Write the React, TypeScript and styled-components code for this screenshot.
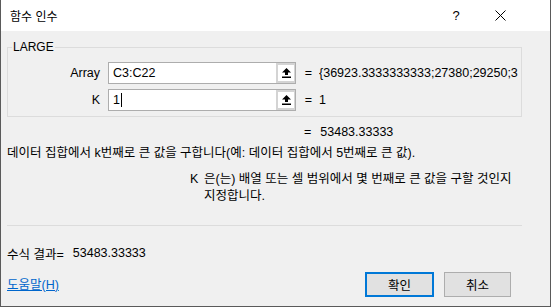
import styled, { createGlobalStyle } from 'styled-components';

const GlobalStyle = createGlobalStyle`
  html, body {
    margin: 0;
    padding: 0;
    background: #ffffff;
  }
  * {
    box-sizing: border-box;
  }
`;

const FONT = `"Liberation Sans", "Noto Sans CJK KR", sans-serif`;

// 대화상자 전체 틀
const Window = styled.div`
  width: 551px;
  height: 307px;
  display: flex;
  flex-direction: column;
  border-left: 1px solid #5a5a5a;
  border-right: 1px solid #5a5a5a;
  border-bottom: 1px solid #5a5a5a;
  font-family: ${FONT};
  font-size: 12.5px;
  color: #000;
  overflow: hidden;
`;

const TitleBar = styled.div`
  height: 31px;
  flex: none;
  display: flex;
  align-items: center;
  background: #ffffff;
  padding: 0 28px 0 9px;
`;

const Title = styled.div`
  flex: 1;
  font-size: 12px;
`;

const TitleButton = styled.div`
  width: 44px;
  height: 31px;
  display: flex;
  align-items: center;
  justify-content: center;
  font-size: 13px;
`;

const Body = styled.div`
  flex: 1;
  display: flex;
  flex-direction: column;
  background: #f0f0f0;
  padding: 0 28px 0 6px;
`;

const GroupBox = styled.fieldset`
  margin: 9px 0 0 0;
  padding: 8px 0 5px 0;
  border: 1px solid #dcdcdc;
  display: flex;
  flex-direction: column;
  gap: 5px;
`;

const Legend = styled.legend`
  padding: 0 1px;
  margin-left: 4px;
  font-size: 12px;
`;

const ArgRow = styled.div`
  display: grid;
  grid-template-columns: 100px 188px 23px 1fr;
  align-items: center;
  height: 22px;
`;

const ArgLabel = styled.div`
  text-align: right;
  padding-right: 8px;
`;

const InputBox = styled.div`
  height: 22px;
  display: flex;
  align-items: stretch;
  border: 1px solid #adadad;
  background: #ffffff;
`;

const InputText = styled.div`
  flex: 1;
  display: flex;
  align-items: center;
  padding-left: 4px;
  white-space: nowrap;
`;

const Caret = styled.span`
  display: inline-block;
  width: 1px;
  height: 14px;
  background: #000;
  margin-left: 1px;
`;

const RefButton = styled.div`
  width: 19px;
  display: flex;
  align-items: center;
  justify-content: center;
  background: #ffffff;
  border: 2px solid #d4d4d4;
  border-right-width: 1px;
`;

const Equals = styled.div`
  text-align: center;
  padding-left: 2px;
`;

const ArgValue = styled.div`
  white-space: nowrap;
  overflow: hidden;
`;

const ResultLine = styled.div`
  margin-top: 7px;
  padding-left: 297px;
  display: flex;
  gap: 9px;
  height: 15px;
  align-items: center;
`;

const Description = styled.div`
  margin-top: 3px;
  height: 18px;
  display: flex;
  align-items: center;
  white-space: nowrap;
`;

const ParamHelp = styled.div`
  margin-top: 11px;
  display: grid;
  grid-template-columns: 14px 1fr;
  padding-left: 183px;
  line-height: 17px;
  white-space: nowrap;
`;

const Separator = styled.div`
  margin-top: 20px;
  height: 1px;
  background: #dcdcdc;
`;

const FormulaResult = styled.div`
  margin-top: 19px;
  height: 16px;
  display: flex;
  align-items: center;
  gap: 9px;
`;

const Footer = styled.div`
  margin-top: 11px;
  padding-right: 11px;
  display: flex;
  align-items: center;
`;

const HelpLink = styled.a`
  color: #0066cc;
  text-decoration: underline;
  flex: 1;
  margin-bottom: 3px;
`;

const DialogButton = styled.button<{ primary?: boolean }>`
  width: ${(p) => (p.primary ? '69px' : '67px')};
  height: 25px;
  margin-left: ${(p) => (p.primary ? '0' : '10px')};
  background: #e1e1e1;
  border: ${(p) => (p.primary ? '2px solid #0078d7' : '1px solid #adadad')};
  font-family: ${FONT};
  font-size: 12.5px;
  color: #000;
  padding: 0;
`;

function UpArrow() {
  return (
    <svg width="11" height="12" viewBox="0 0 11 12">
      <path d="M5.5 1 L10 5.5 L7 5.5 L7 8 L4 8 L4 5.5 L1 5.5 Z" fill="#000" />
      <rect x="1" y="9.5" width="9" height="1.5" fill="#000" />
    </svg>
  );
}

function CloseIcon() {
  return (
    <svg width="11" height="11" viewBox="0 0 11 11">
      <path d="M0.5 0.5 L10.5 10.5 M10.5 0.5 L0.5 10.5" stroke="#000" strokeWidth="1" />
    </svg>
  );
}

const args = [
  { name: 'Array', text: 'C3:C22', value: '{36923.3333333333;27380;29250;3', caret: false },
  { name: 'K', text: '1', value: '1', caret: true },
];

export default function App() {
  return (
    <>
      <GlobalStyle />
      <Window>
        <TitleBar>
          <Title>함수 인수</Title>
          <TitleButton>?</TitleButton>
          <TitleButton>
            <CloseIcon />
          </TitleButton>
        </TitleBar>
        <Body>
          <GroupBox>
            <Legend>LARGE</Legend>
            {args.map((a) => (
              <ArgRow key={a.name}>
                <ArgLabel>{a.name}</ArgLabel>
                <InputBox>
                  <InputText>
                    {a.text}
                    {a.caret && <Caret />}
                  </InputText>
                  <RefButton>
                    <UpArrow />
                  </RefButton>
                </InputBox>
                <Equals>=</Equals>
                <ArgValue>{a.value}</ArgValue>
              </ArgRow>
            ))}
          </GroupBox>
          <ResultLine>
            <span>=</span>
            <span>53483.33333</span>
          </ResultLine>
          <Description>
            데이터 집합에서 k번째로 큰 값을 구합니다(예: 데이터 집합에서 5번째로 큰 값).
          </Description>
          <ParamHelp>
            <span>K</span>
            <span>
              은(는) 배열 또는 셀 범위에서 몇 번째로 큰 값을 구할 것인지
              <br />
              지정합니다.
            </span>
          </ParamHelp>
          <Separator />
          <FormulaResult>
            <span>수식 결과=</span>
            <span>53483.33333</span>
          </FormulaResult>
          <Footer>
            <HelpLink href="#">도움말(H)</HelpLink>
            <DialogButton primary>확인</DialogButton>
            <DialogButton>취소</DialogButton>
          </Footer>
        </Body>
      </Window>
    </>
  );
}
